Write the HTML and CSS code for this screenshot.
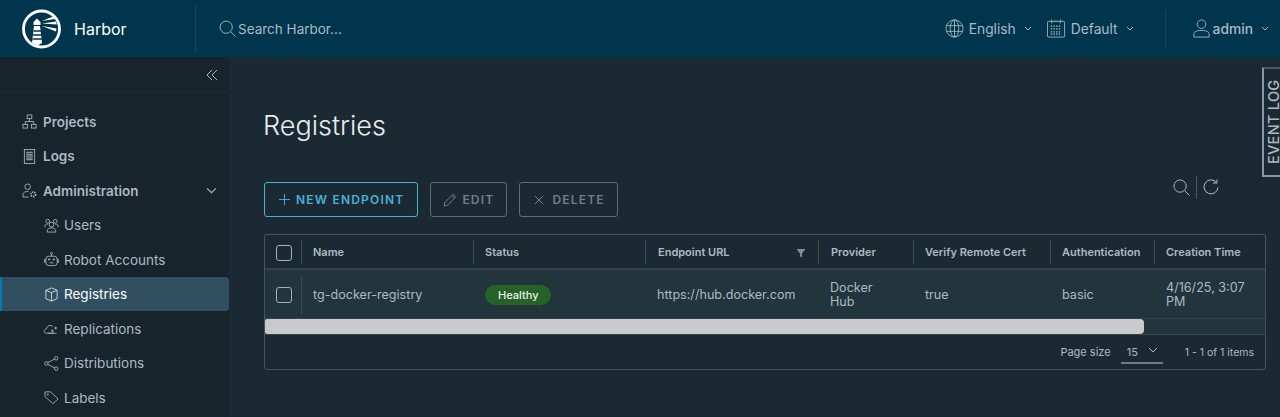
FILE: index.html
```html
<!DOCTYPE html>
<html lang="en">
<head>
    <meta charset="UTF-8">
    <title>Harbor - Registries</title>
    <link rel="stylesheet" href="styles.css">
</head>
<body>
    <header class="topbar">
        <div class="brand">
            <svg class="logo" viewBox="0 0 40 40">
                <circle cx="19.500" cy="20" r="18" fill="none" stroke="#fff" stroke-width="2.800"/>
                <path d="M11.500 13l3.500-3.500 3.500 3.500v3h-7z" fill="#fff"/>
                <path d="M12 17h6l2 17-4.300 2.500-5.700-2.500z" fill="#fff"/>
                <path d="M11.500 22h7.500M11 26h8.500M10.500 30h9.500" stroke="#00364d" stroke-width="1.400"/>
                <path d="M20 12l11-4.500 2 2.500zM20 14.500l14-2 .8 3zM20 17l14.500 2.500-.5 3z" fill="#fff"/>
            </svg>
            <span class="brand-name">Harbor</span>
        </div>
        <div class="search">
            <svg class="icon-search" viewBox="0 0 20 20" fill="none" stroke="#a9bcc5" stroke-width="1"><circle cx="8" cy="8" r="6.800"/><path d="M13 13l5.500 5.500"/></svg>
            <span>Search Harbor...</span>
        </div>
        <div class="top-right">
            <div class="top-item">
                <svg class="icon-20" viewBox="0 0 20 20" fill="none" stroke="#a9bcc5" stroke-width=".9"><circle cx="10" cy="10" r="9"/><ellipse cx="10" cy="10" rx="4.500" ry="9"/><path d="M10 1v18M1.500 7h17M1.500 13h17"/></svg>
                <span>English</span>
                <svg class="caret" viewBox="0 0 8 5" fill="none" stroke="#a9bcc5"><path d="M1 1l3 3 3-3"/></svg>
            </div>
            <div class="top-item">
                <svg class="icon-20" viewBox="0 0 20 20" fill="none" stroke="#a9bcc5" stroke-width=".9"><rect x=".5" y="2.500" width="18" height="16.500" rx="1"/><path d="M5 .5v4M14 .5v4M8 2.500h3"/><path d="M4 7.500h11M4 10.500h11M4 13.500h11M4 16h11" stroke-dasharray="1.500 1.300" stroke-width="1.300"/></svg>
                <span>Default</span>
                <svg class="caret" viewBox="0 0 8 5" fill="none" stroke="#a9bcc5"><path d="M1 1l3 3 3-3"/></svg>
            </div>
            <div class="divider"></div>
            <div class="top-item user">
                <svg class="icon-20" viewBox="0 0 20 20" fill="none" stroke="#a9bcc5" stroke-width=".9"><circle cx="10" cy="5.500" r="4.500"/><path d="M2 19v-3.500c0-2 3.500-3.500 8-3.500s8 1.500 8 3.500V19z"/></svg>
                <span>admin</span>
                <svg class="caret" viewBox="0 0 8 5" fill="none" stroke="#a9bcc5"><path d="M1 1l3 3 3-3"/></svg>
            </div>
        </div>
    </header>

    <div class="layout">
        <nav class="sidebar">
            <div class="collapse-row">
                <svg class="icon-collapse" viewBox="0 0 12 12" fill="none" stroke="#a9bcc5"><path d="M6 1L1 6l5 5M11 1L6 6l5 5"/></svg>
            </div>
            <div class="nav-list">
                <a class="nav-item top">
                    <svg class="nav-icon" viewBox="0 0 16 16" fill="none" stroke="#a9bcc5" stroke-width=".9"><rect x="5.500" y="1" width="5" height="4"/><rect x="1" y="11" width="5" height="4"/><rect x="10" y="11" width="5" height="4"/><path d="M8 5v3M3.500 11V8h9v3"/></svg>
                    Projects
                </a>
                <a class="nav-item top">
                    <svg class="nav-icon" viewBox="0 0 16 16" fill="none" stroke="#a9bcc5" stroke-width=".9"><rect x="2.500" y=".5" width="11" height="15"/><path d="M4.500 3.500h7M4.500 5.500h7M4.500 7.500h7M4.500 9.500h7M4.500 11.500h7" stroke-width="1.100"/></svg>
                    Logs
                </a>
                <a class="nav-item top">
                    <svg class="nav-icon" viewBox="0 0 16 16" fill="none" stroke="#a9bcc5" stroke-width=".9"><circle cx="6" cy="4" r="3"/><path d="M1 15v-3c0-1.500 2-3 5-3h1M1 15h6"/><circle cx="12" cy="12" r="2.500" stroke-width="1.600" stroke-dasharray="1.500 .8"/></svg>
                    Administration
                    <svg class="nav-chevron" viewBox="0 0 12 8" fill="none" stroke="#b3c0c7" stroke-width="1.200"><path d="M1 1.500l5 5 5-5"/></svg>
                </a>
                <a class="nav-item sub">
                    <svg class="nav-icon" viewBox="0 0 16 16" fill="none" stroke="#a9bcc5" stroke-width=".9"><circle cx="8" cy="7" r="2.500"/><path d="M3.500 15v-1.500c0-2 2-3 4.500-3s4.500 1 4.500 3V15zM1 10V8.500C1 7 2.500 6.500 4 6.500M15 10V8.500C15 7 13.500 6.500 12 6.500"/><circle cx="4" cy="3.500" r="2"/><circle cx="12" cy="3.500" r="2"/></svg>
                    Users
                </a>
                <a class="nav-item sub">
                    <svg class="nav-icon" viewBox="0 0 16 16" fill="none" stroke="#a9bcc5" stroke-width=".9"><rect x="2" y="4.500" width="12" height="10" rx="3"/><path d="M8 4.500V2M2 8H.5v3H2M14 8h1.500v3H14M6 11.500h4"/><circle cx="8" cy="1.500" r="1"/><circle cx="5.500" cy="8" r=".7" fill="#a9bcc5"/><circle cx="10.500" cy="8" r=".7" fill="#a9bcc5"/></svg>
                    Robot Accounts
                </a>
                <a class="nav-item sub active">
                    <svg class="nav-icon" viewBox="0 0 16 16" fill="none" stroke="#dfe6ea" stroke-width=".9"><path d="M8 1l6 2.500v9L8 15l-6-2.500v-9zM2 3.500L8 6l6-2.500M8 6v9"/></svg>
                    Registries
                </a>
                <a class="nav-item sub">
                    <svg class="nav-icon wide" viewBox="0 0 16 16" fill="none" stroke="#a9bcc5" stroke-width=".9"><path d="M11 13H3c-3 0-3-4 0-4.500C3.500 5 8 3.500 10 6"/><path d="M13 6v3M11.500 7.500h3M5 13h9M8 10.500h3M9.500 9v3"/></svg>
                    Replications
                </a>
                <a class="nav-item sub">
                    <svg class="nav-icon" viewBox="0 0 16 16" fill="none" stroke="#a9bcc5" stroke-width=".9"><circle cx="2.500" cy="8" r="1.800"/><circle cx="13" cy="2.500" r="1.800"/><circle cx="13" cy="13.500" r="1.800"/><path d="M4 7l7.500-3.800M4 9l7.500 3.800"/></svg>
                    Distributions
                </a>
                <a class="nav-item sub">
                    <svg class="nav-icon" viewBox="0 0 16 16" fill="none" stroke="#a9bcc5" stroke-width=".9"><path d="M1 2h6l8 7.500-5.500 5L1 7z"/><circle cx="4" cy="4.800" r=".6"/></svg>
                    Labels
                </a>
            </div>
        </nav>

        <main class="content">
            <h1 class="page-title">Registries</h1>
            <div class="toolbar">
                <div class="actions">
                    <button class="btn primary">
                        <svg class="btn-icon" viewBox="0 0 14 14" fill="none" stroke="#49afd9"><path d="M7 1v12M1 7h12"/></svg>
                        NEW ENDPOINT
                    </button>
                    <button class="btn">
                        <svg class="btn-icon pencil" viewBox="0 0 14 14" fill="none" stroke="#6f7f87"><path d="M1 13l.8-3.500L10 1.300l2.700 2.700-8.200 8.200zM8.800 2.500l2.700 2.700"/></svg>
                        EDIT
                    </button>
                    <button class="btn">
                        <svg class="btn-icon small" viewBox="0 0 10 10" fill="none" stroke="#6f7f87"><path d="M1 1l8 8M9 1l-8 8"/></svg>
                        DELETE
                    </button>
                </div>
                <div class="table-tools">
                    <svg class="tool-icon" viewBox="0 0 18 18" fill="none" stroke="#b3c0c7"><circle cx="7.500" cy="7.500" r="6.500"/><path d="M12.500 12.500l5 5"/></svg>
                    <span class="tool-sep"></span>
                    <svg class="tool-icon refresh" viewBox="0 0 16 16" fill="none" stroke="#b3c0c7"><path d="M13.500 3.500A7 7 0 1 0 15 8.500"/><path d="M14 .5v3.500h-4"/></svg>
                </div>
            </div>

            <div class="datagrid">
                <div class="row head">
                    <div class="cell check"><span class="checkbox"></span></div>
                    <div class="cell">Name</div>
                    <div class="cell">Status</div>
                    <div class="cell filter">Endpoint URL
                        <svg class="filter-icon" viewBox="0 0 10 10"><path d="M.5 1h9L6 5.500V9.500L4 8.500V5.500z" fill="#7d8e96"/></svg>
                    </div>
                    <div class="cell">Provider</div>
                    <div class="cell">Verify Remote Cert</div>
                    <div class="cell">Authentication</div>
                    <div class="cell">Creation Time</div>
                </div>
                <div class="row body">
                    <div class="cell check"><span class="checkbox"></span></div>
                    <div class="cell">tg-docker-registry</div>
                    <div class="cell"><span class="badge">Healthy</span></div>
                    <div class="cell">https://hub.docker.com</div>
                    <div class="cell">Docker Hub</div>
                    <div class="cell">true</div>
                    <div class="cell">basic</div>
                    <div class="cell">4/16/25, 3:07 PM</div>
                </div>
                <div class="scrollbar"><div class="thumb"></div></div>
                <div class="grid-footer">
                    <span>Page size</span>
                    <span class="page-select">15
                        <svg class="select-caret" viewBox="0 0 10 6" fill="none" stroke="#a9bcc5"><path d="M1 1l4 4 4-4"/></svg>
                    </span>
                    <span class="page-count">1 - 1 of 1 items</span>
                </div>
            </div>
        </main>
    </div>

    <div class="event-log">EVENT LOG</div>
</body>
</html>
```

FILE: styles.css
```css
* { box-sizing: border-box; }
html, body { height: 417px; overflow: hidden; }
body { margin: 0; background: #1b2a32; color: #acbac3; font-family: Inter, "Noto Sans", sans-serif; font-size: 13px; }

.topbar { height: 57px; background: #00364d; display: flex; align-items: center; color: #acbac3; }
.brand { width: 196px; height: 48px; display: flex; align-items: center; padding-left: 22px; border-right: 1px solid #15475c; }
.logo { width: 40px; height: 40px; }
.brand-name { margin-left: 12px; font-size: 16px; color: #fff; }
.search { display: flex; align-items: center; margin-left: 23px; font-size: 13.500px; }
.icon-search { width: 18px; height: 18px; margin-right: 1px; }
.top-right { margin-left: auto; display: flex; align-items: center; height: 100%; }
.top-item { display: flex; align-items: center; gap: 5px; font-size: 13.800px; margin-right: 15px; }
.icon-20 { width: 19px; height: 19px; }
.caret { width: 8px; height: 5px; margin-left: 3px; }
.divider { width: 1px; height: 38px; background: #15475c; margin: 0 26px 0 16px; }
.user { margin-right: 11px; gap: 2px; font-weight: 500; }
.user .caret { margin-left: 6px; }

.layout { display: flex; height: 360px; }
.sidebar { width: 229px; flex: none; background: #17242b; overflow: hidden; }
.collapse-row { height: 36px; display: flex; align-items: center; justify-content: flex-end; padding-right: 11px; border-bottom: 1px solid #1f2e36; }
.icon-collapse { width: 12px; height: 12px; }
.nav-list { padding-top: 11.300px; }
.nav-item { height: 34.500px; display: flex; align-items: center; gap: 6px; border-radius: 0 4px 4px 0; }
.nav-icon { width: 15px; height: 15px; flex: none; }
.nav-icon.wide { width: 16px; margin-left: -1px; }
.top { padding-left: 22px; font-weight: 600; font-size: 13.500px; }
.sub { padding-left: 44px; gap: 5px; font-size: 13.500px; }
.nav-chevron { width: 11px; height: 7px; margin-left: auto; margin-right: 12px; }
.active { background: #324f61; color: #fff; border-left: 2px solid #0079b8; padding-left: 42px; }

.content { flex: 1; padding: 0 14px 0 35px; }
.page-title { margin: 52px 0 0 -1px; height: 34px; font-size: 27px; line-height: 34px; font-weight: 300; color: #e9ecef; }
.toolbar { margin-top: 39px; height: 52px; display: flex; justify-content: space-between; }
.actions { display: flex; gap: 12px; height: 35px; }
.btn { height: 35px; padding: 0 12px; display: flex; align-items: center; gap: 5px; background: transparent; border: 1px solid #5d6d75; border-radius: 3px; color: #6f7f87; font: 600 12px Inter, sans-serif; letter-spacing: 1.200px; }
.btn.primary { padding: 0 13px; color: #49afd9; border-color: #49afd9; }
.btn-icon { width: 13px; height: 13px; }
.btn-icon.pencil { width: 14px; height: 14px; }
.btn-icon.small { width: 10px; height: 10px; margin: 0 3px 0 2px; }
.table-tools { display: flex; align-items: center; height: 24px; margin: -7px 47px 0 0; gap: 6px; }
.tool-icon { width: 17px; height: 17px; }
.tool-icon.refresh { width: 16px; height: 16px; }
.tool-sep { width: 1px; height: 23px; background: #4a5a62; }

.datagrid { height: 136px; border: 1px solid #43545d; border-radius: 3px; }
.row { display: grid; grid-template-columns: 36px 172px 172px 173px 95px 137px 104px 1fr; align-items: center; }
.head { height: 35px; border-bottom: 2px solid #33444d; font-size: 11px; font-weight: 600; color: #acbac3; }
.body { height: 49px; padding-top: 1px; background: #22343c; border-bottom: 1px solid #33444d; color: #acbac3; font-size: 12.600px; line-height: 14px; }
.cell { padding: 0 8px 0 11px; }
.row .cell:nth-child(4), .row .cell:nth-child(5) { padding-left: 12px; }
.body .cell:nth-child(5) { padding-right: 30px; }
.head .cell { height: 24px; line-height: 24px; border-left: 1px solid #3a4b54; }
.head .check { border-left: 0; }
.body .cell:nth-child(2) { border-left: 1px solid #3a4b54; height: 38px; line-height: 38px; }
.body .cell:nth-child(n+3) { padding-left: 12px; }
.check { display: flex; align-items: center; justify-content: center; padding: 0 0 0 2px; }
.checkbox { width: 16px; height: 16px; border: 1px solid #a3b2ba; border-radius: 3px; }
.head .checkbox { margin-top: 2px; }
.filter { display: flex; align-items: center; justify-content: space-between; }
.head .filter { padding-right: 12px; }
.filter-icon { width: 10px; height: 10px; margin-top: 2px; }
.badge { display: inline-block; height: 20px; padding: 0 13px; line-height: 20px; border-radius: 10px; background: #266127; color: #eaf3ea; font-size: 11px; font-weight: 500; }

.scrollbar { height: 16px; background: #22343c; border-bottom: 1px solid #33444d; }
.thumb { width: 879px; height: 15px; background: #cacaca; border-radius: 2px 4px 4px 2px; }
.grid-footer { height: 34px; display: flex; align-items: center; justify-content: flex-end; font-size: 11px; padding-right: 11px; color: #acbac3; }
.page-count { font-size: 10.500px; }
.page-select { width: 42px; height: 24px; margin: 0 22px 0 10px; padding: 5px 0 0 6px; border-bottom: 2px solid #6b7c85; display: flex; gap: 10px; font-size: 11px; }
.select-caret { width: 10px; height: 6px; margin-top: 2px; }

.event-log { position: absolute; top: 67px; right: -4px; width: 22px; height: 110px; writing-mode: vertical-rl; transform: rotate(180deg); background: #1b2a32; border-top: 2px solid #8a979d; border-bottom: 2px solid #4a5a62; border-right: 2px solid #8a979d; text-align: center; font-size: 14.500px; letter-spacing: .3px; font-weight: 500; color: #acbac3; line-height: 20px; overflow: hidden; white-space: nowrap; }
```
